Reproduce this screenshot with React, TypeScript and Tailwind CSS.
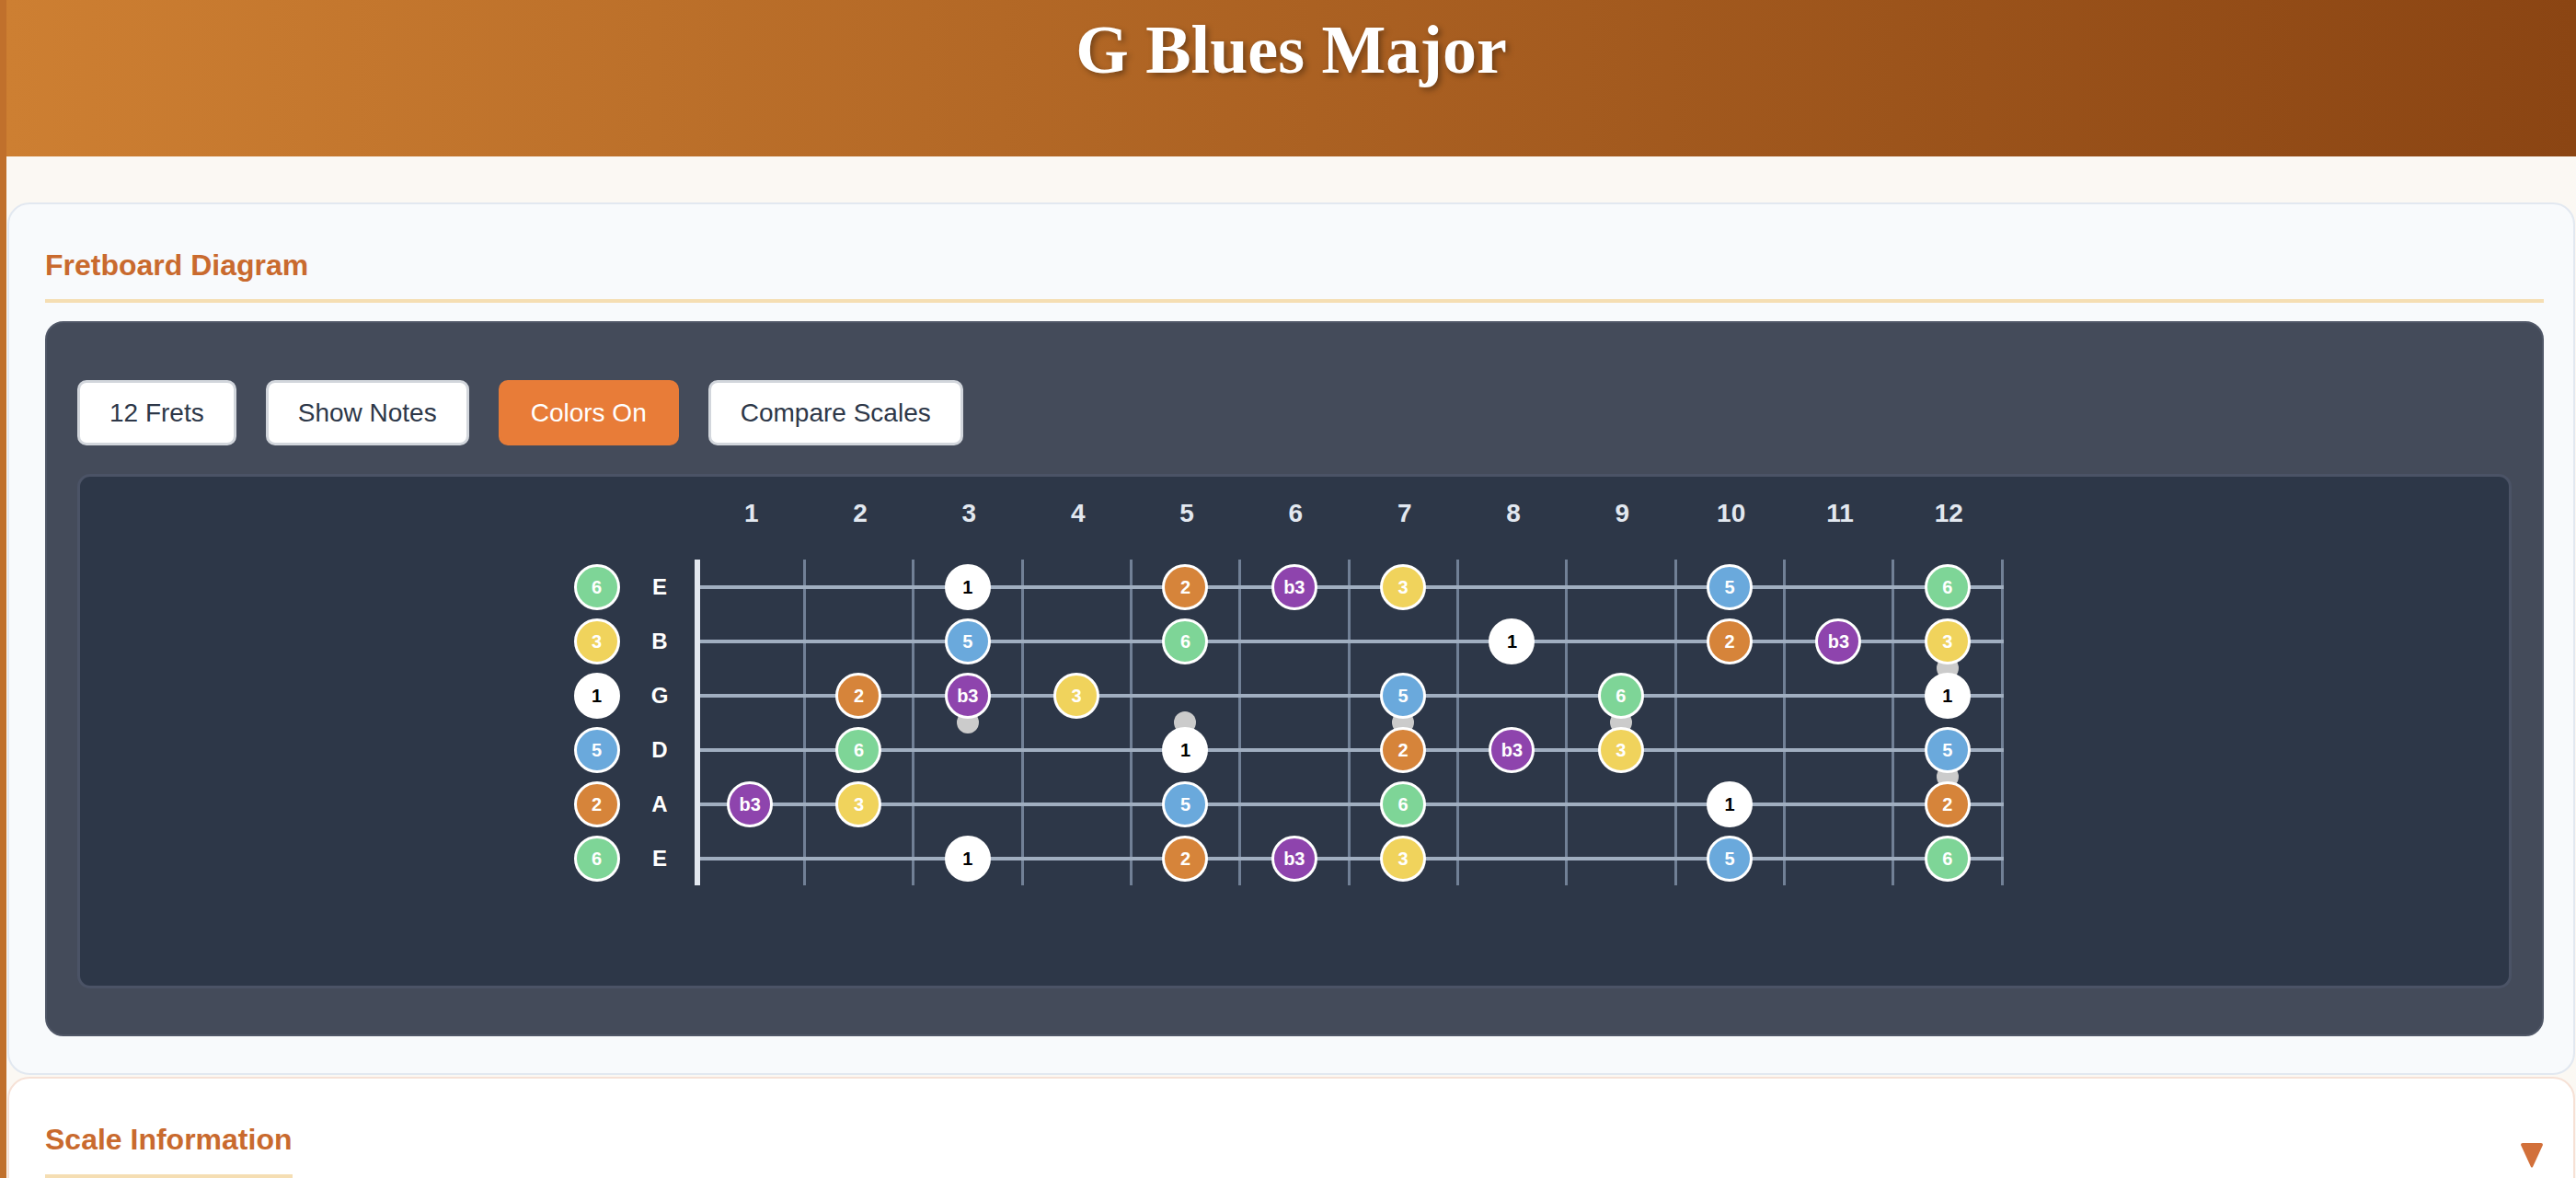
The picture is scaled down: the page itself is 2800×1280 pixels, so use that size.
import { ReactElement } from 'react';

// open string pitch classes, high E at the top
const STRINGS = [
  { name: 'E', pc: 4 },
  { name: 'B', pc: 11 },
  { name: 'G', pc: 7 },
  { name: 'D', pc: 2 },
  { name: 'A', pc: 9 },
  { name: 'E', pc: 4 },
];

const ROOT = 7; // G

const DEGREES: Record<number, string> = { 0: '1', 2: '2', 3: 'b3', 4: '3', 7: '5', 9: '6' };

const NOTE_STYLE: Record<string, string> = {
  '1': 'bg-white text-black',
  '2': 'bg-[#d6843a] text-white',
  b3: 'bg-[#8e44ad] text-white',
  '3': 'bg-[#f0d35c] text-white',
  '5': 'bg-[#6aa9dc] text-white',
  '6': 'bg-[#7ed597] text-white',
};

const FRETS = [1, 2, 3, 4, 5, 6, 7, 8, 9, 10, 11, 12];

// inlay dots: "fret-row" where the dot sits under that string row
const MARKERS: Record<string, boolean> = {
  '3-2': true,
  '5-2': true,
  '7-2': true,
  '9-2': true,
  '12-1': true,
  '12-3': true,
};

function degreeOf(pc: number, fret: number) {
  return DEGREES[(pc + fret - ROOT + 24) % 12];
}

function NoteDot({ label }: { label: string }) {
  return (
    <div
      className={`relative z-20 flex h-[50px] w-[50px] items-center justify-center rounded-full border-[3px] border-white text-[20px] font-bold leading-none ${NOTE_STYLE[label]}`}
    >
      {label}
    </div>
  );
}

function StringRow({ row }: { row: number }) {
  const s = STRINGS[row];
  const open = degreeOf(s.pc, 0);
  return (
    <div className="flex h-[59px] items-center">
      <div className="flex w-[56px] justify-center">{open && <NoteDot label={open} />}</div>
      <div className="w-[81px] text-center text-[24px] font-bold text-white">{s.name}</div>
      <div className="relative grid h-full w-[1420px] grid-cols-12">
        <div className="absolute left-[-3px] top-0 bottom-0 z-[5] w-[6px] bg-[#e2e8f0]" />
        <div className="absolute left-0 right-0 top-1/2 z-[1] h-[4px] -translate-y-1/2 bg-[#a0aec0]" />
        {FRETS.map((f) => {
          const d = degreeOf(s.pc, f);
          return (
            <div key={f} className="relative flex items-center justify-center border-r-[3px] border-[#718096]">
              {MARKERS[`${f}-${row}`] && (
                <div className="absolute bottom-0 left-1/2 z-10 h-[24px] w-[24px] -translate-x-1/2 translate-y-1/2 rounded-full bg-[#cbcbcb]" />
              )}
              {d && <NoteDot label={d} />}
            </div>
          );
        })}
      </div>
    </div>
  );
}

function Fretboard(): ReactElement {
  return (
    <div className="mt-[31px] rounded-[14px] border-[3px] border-[#4b5366] bg-[#2d3748] pt-[24px] pb-[109px]">
      <div className="flex justify-center pr-[16px]">
        <div>
          <div className="mb-[34px] flex">
            <div className="w-[137px]" />
            <div className="grid w-[1420px] grid-cols-12">
              {FRETS.map((f) => (
                <div key={f} className="text-center text-[28px] font-bold leading-[32px] text-[#e2e8f0]">
                  {f}
                </div>
              ))}
            </div>
          </div>
          {STRINGS.map((_, i) => (
            <StringRow key={i} row={i} />
          ))}
        </div>
      </div>
    </div>
  );
}

export default function App() {
  const buttons = [
    { label: '12 Frets', active: false },
    { label: 'Show Notes', active: false },
    { label: 'Colors On', active: true },
    { label: 'Compare Scales', active: false },
  ];

  return (
    <div className="min-h-screen border-l-[7px] border-[#c0702c] bg-[#fbf8f3] font-['Liberation_Sans',Arial,sans-serif]">
      {/* Header */}
      <header className="h-[170px] bg-gradient-to-r from-[#cd7f32] to-[#8b4513] pt-[17px] text-center">
        <h1 className="font-['Liberation_Serif','Times_New_Roman',serif] text-[74px] font-bold leading-none text-white [text-shadow:3px_3px_6px_rgba(0,0,0,0.35)]">
          G Blues Major
        </h1>
      </header>

      <main className="mx-px">
        {/* Fretboard card */}
        <section className="mt-[50px] rounded-[24px] border-2 border-[#e2e8f0] bg-[#f8fafc] pt-[47px] pb-[40px] pl-[39px] pr-[32px]">
          <h2 className="border-b-4 border-[#f5deb3] pb-[18px] text-[32px] font-bold leading-[1.2] text-[#c96a2e]">
            Fretboard Diagram
          </h2>
          <div className="mt-[20px] rounded-[20px] border-2 border-[#505767] bg-[#444b5a] px-[33px] pt-[62px] pb-[50px]">
            <div className="flex gap-8">
              {buttons.map((b) => (
                <button
                  key={b.label}
                  className={
                    b.active
                      ? 'h-[71px] rounded-[10px] border-[3px] border-[#e87c38] bg-[#e87c38] px-[32px] text-[28px] text-white'
                      : 'h-[71px] rounded-[10px] border-[3px] border-[#d2d6dc] bg-white px-[32px] text-[28px] text-[#2d3748]'
                  }
                >
                  {b.label}
                </button>
              ))}
            </div>
            <Fretboard />
          </div>
        </section>

        {/* Scale information card */}
        <section className="mt-[2px] h-[300px] rounded-[24px] border-2 border-[#f6e1d6] bg-white pt-[47px] pl-[39px] pr-[32px]">
          <div className="flex items-start justify-between">
            <h2 className="inline-block border-b-4 border-[#f5deb3] pb-[18px] text-[32px] font-bold leading-[1.2] text-[#c96a2e]">
              Scale Information
            </h2>
            <svg width="26" height="27" viewBox="0 0 26 27" className="mt-[23px]">
              <path d="M1 2 Q1 0 3 0 L23 0 Q25 0 25 2 L14 26 Q13 27 12 26 Z" fill="#d2703a" />
            </svg>
          </div>
        </section>
      </main>
    </div>
  );
}
